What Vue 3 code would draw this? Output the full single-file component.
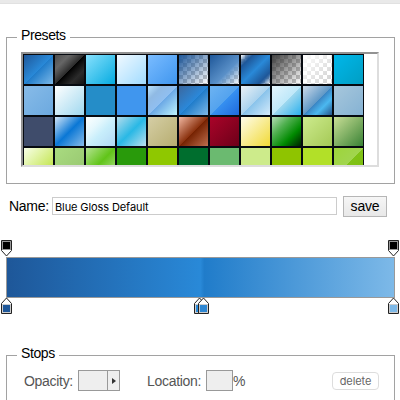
<script setup>
const d = (...s) => `linear-gradient(135deg, ${s.join(', ')})`
const check = 'repeating-conic-gradient(#c4c4c4 0 25%, #fff 0 50%) 0 0 / 8px 8px'
const swatches = [
  d('#1e5799', '#2989d8 50%', '#207cca 51%', '#7db9e8'),
  d('#4c4c4c', '#595959 12%', '#666 25%', '#474747 39%', '#2c2c2c 50%', '#000 51%', '#111 60%', '#2b2b2b 76%', '#1c1c1c 91%', '#131313'),
  d('#87e0fd', '#53cbf1 40%', '#05abe0'),
  d('#f0f9ff', '#cbebff 47%', '#a1dbff'),
  d('#7abcff', '#60abf8 44%', '#4096ee'),
  d('#1e5799', '#7db9e800') + ', ' + check,
  d('#1e5799', '#5a90c8 59%', '#7db9e800') + ', ' + check,
  d('#1e579900', '#1e5799cc 15%', '#1e5799 20%', '#2989d8 50%', '#1e5799 80%', '#1e5799cc 85%', '#1e579900') + ', ' + check,
  d('#404040', '#00000000') + ', ' + check,
  d('#fff', '#ffffff30') + ', ' + check,
  d('#00b7ea', '#009ec3'),
  d('#87bbe8', '#6ca9df'),
  d('#fff', '#ddf1f9 35%', '#a0d8ef'),
  '#258dc8',
  '#4096ee',
  d('#b8e1fc', '#a9d2f3 10%', '#90bae4 25%', '#90bcea 37%', '#90bff0 50%', '#6ba8e5 51%', '#a2daf5 83%', '#bdf3fd'),
  d('#3b679e', '#2b88d9 50%', '#207cca 51%', '#7db9e8'),
  d('#6db3f2', '#54a3ee 50%', '#3690f0 51%', '#1e69de'),
  d('#ebf1f6', '#abd3ee 50%', '#89c3eb 51%', '#d5ebfb'),
  d('#e4f5fc', '#bfe8f9 50%', '#9fd8ef 51%', '#2ab0ed'),
  d('#cedbe9', '#aac5de 17%', '#6199c7 50%', '#3a84c3 51%', '#419ad6 59%', '#4bb8f0 71%', '#3a8bc2 84%', '#26558b'),
  d('#a7c7dc', '#85b2d3'),
  '#3f4c6b',
  d('#d0e4f7', '#73b1e7 24%', '#0a77d5 50%', '#539fe1 79%', '#87bcea'),
  d('#fdffff', '#e6f8fd 30%', '#c8eefb 54%', '#bee4f8 75%', '#b1d8f5'),
  d('#b3dced', '#29b8e5 50%', '#bce0ee'),
  d('#d5cea6', '#c9c190 40%', '#b7ad70'),
  d('#f0b7a1', '#8c3310 50%', '#752201 51%', '#bf6e4e'),
  d('#a90329', '#8f0222 44%', '#6d0019'),
  d('#fefcea', '#f1da36'),
  d('#b4ddb4', '#83c783 17%', '#52b152 33%', '#008a00 67%', '#005700 83%', '#002400'),
  d('#cdeb8e', '#a5c956'),
  d('#c9de96', '#8ab66b 44%', '#398235'),
  d('#f8ffe8', '#e3f5ab 33%', '#b7df2d'),
  d('#a9db80', '#96c56f'),
  d('#b4e391', '#61c419 50%', '#b4e391'),
  '#299a0b',
  '#8fc800',
  '#006e2e',
  '#6bba70',
  '#cdeb8b',
  '#8fc400',
  '#b2e028',
  d('#9dd53a', '#a1d54f 50%', '#80c217 51%', '#7cbc0a'),
]
const stops = [
  { kind: 'top', x: 6, color: '#000' },
  { kind: 'top', x: 393, color: '#000' },
  { kind: 'bottom', x: 6, color: '#1e5799' },
  { kind: 'bottom', x: 199, color: '#2989d8' },
  { kind: 'bottom', x: 203, color: '#2c86d2' },
  { kind: 'bottom', x: 393, color: '#7db9e8' },
]
</script>

<template>
  <main class="editor">
    <div class="topbar"></div>
    <section class="group presets">
      <h2 class="legend">Presets</h2>
      <div class="well">
        <div class="grid">
          <i v-for="(s, i) in swatches" :key="i" class="swatch" :style="{ background: s }"></i>
        </div>
      </div>
    </section>
    <div class="name-row">
      <label class="name-label">Name:</label>
      <div class="name-input"><span>Blue Gloss Default</span></div>
      <button class="save">save</button>
    </div>
    <div class="slider">
      <div class="bar"></div>
      <svg
        v-for="(s, i) in stops"
        :key="i"
        :class="['stop', s.kind]"
        :style="{ left: s.x - 5 + 'px' }"
        width="11" height="17" viewBox="0 0 11 17"
      >
        <g v-if="s.kind === 'top'">
          <path d="M.5.5h10v10L5.5 16 .5 10.5z" fill="#fff" stroke="#222" />
          <path d="M1 1h9v9H1z" fill="#999" />
          <path d="M2 2h7v7H2z" :fill="s.color" />
        </g>
        <g v-else>
          <path d="M5.5 1l5 5.5v10H.5v-10z" fill="#fff" stroke="#222" />
          <path d="M1 7h9v9H1z" fill="#ccc" />
          <path d="M2 8h7v7H2z" :fill="s.color" />
        </g>
      </svg>
    </div>
    <section class="group stops">
      <h2 class="legend">Stops</h2>
      <div class="fields">
        <label class="opacity-label">Opacity:</label>
        <div class="opacity"><span class="value"></span><span class="arrow"><svg width="4" height="6"><path d="M0 0l4 3-4 3z" fill="#333" /></svg></span></div>
        <label class="loc">Location:</label>
        <div class="location"></div>
        <span class="pct">%</span>
        <button class="delete">delete</button>
      </div>
    </section>
  </main>
</template>

<style>
body { background: #fff; overflow: hidden; }
</style>

<style scoped>
* { box-sizing: border-box; }
.editor { width: 400px; height: 400px; overflow: hidden; background: #fff; color: #111; font: 14px/16px "Liberation Sans", Arial, sans-serif; letter-spacing: -0.3px; }
.topbar { height: 4px; background: #e9e9e9; border-bottom: 1px solid #e1e1e1; }
.group { margin-left: 6px; width: 389px; border: 1px solid #a2a2a2; }
.legend { width: max-content; height: 16px; margin: -11px 0 0 10px; padding: 0 4px; background: #fff; font-size: 14px; font-weight: 400; line-height: 16px; letter-spacing: -0.4px; color: #000; }
.presets { margin-top: 33px; height: 147px; }
.well { margin: 9px 0 0 14px; width: 358px; height: 115px; border: 2px solid #ddd; border-top-color: #929292; border-left-color: #929292; overflow: hidden; }
.grid { display: grid; grid-template-columns: repeat(11, 29px); grid-auto-rows: 29px; gap: 2px; width: 341px; padding: 1px; background: #060a10; }
.swatch { display: block; }
.name-row { display: flex; align-items: center; margin-top: 11px; padding-left: 9px; height: 22px; }
.name-label { width: 39px; color: #000; }
.name-input { margin-left: 4px; width: 285px; height: 18px; border: 1px solid #ccc; padding: 2px 2px 0; font: 11px/14px Inter, sans-serif; letter-spacing: -0.1px; color: #000; }
.save { margin-left: 6px; width: 44px; height: 21px; padding: 0; border: 1px solid #b6b6b6; background: linear-gradient(#f6f6f6, #e8e8e8); font: 14px/16px "Liberation Sans", Arial, sans-serif; letter-spacing: -0.2px; color: #000; }
.slider { position: relative; margin-top: 23px; height: 76px; padding: 17px 0 0 6px; }
.bar { width: 389px; height: 41px; border: 1px solid #999; background: linear-gradient(to right, #1e5799 0%, #2989d8 50%, #207cca 51%, #7db9e8 100%); }
.stop { position: absolute; display: block; }
.top { top: 0; }
.bottom { top: 57px; }
.stops { margin-top: 39px; height: 90px; }
.fields { display: flex; align-items: center; padding: 9px 0 0 17px; color: #555; }
.opacity-label { width: 49px; }
.opacity { display: flex; margin-left: 5px; width: 42px; height: 21px; border: 1px solid #999; background: #eee; }
.value { width: 29px; border-right: 1px solid #999; }
.arrow { flex: 1; display: flex; align-items: center; justify-content: center; }
.loc { margin-left: 27px; width: 55px; }
.location { margin-left: 4px; width: 27px; height: 21px; border: 1px solid #999; background: #eee; }
.pct { width: 12px; }
.delete { margin-left: 87px; width: 47px; height: 18px; padding: 0; border: 1px solid #ddd; border-radius: 4px; background: #fff; font: 11px/14px Inter, sans-serif; letter-spacing: -0.1px; color: #666; }
</style>
